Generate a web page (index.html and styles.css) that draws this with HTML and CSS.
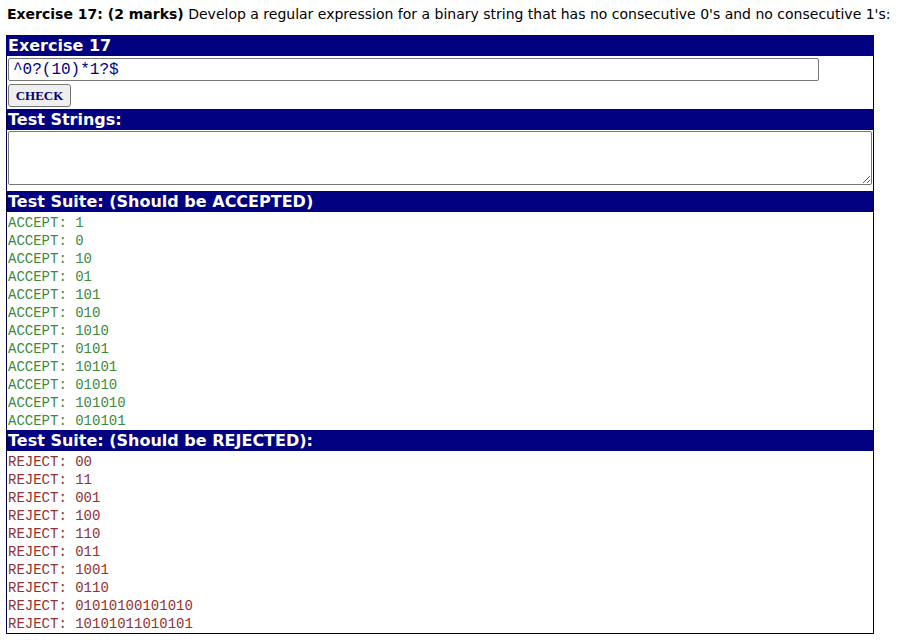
FILE: index.html
```html
<!DOCTYPE html>
<html>
<head>
<meta charset="utf-8">
<link rel="stylesheet" href="styles.css">
</head>
<body>
<p class="intro"><b>Exercise 17: (2 marks)</b> Develop a regular expression for a binary string that has no consecutive 0's and no consecutive 1's:</p>
<div class="box">
  <div class="hdr hdr-first">Exercise 17</div>
  <input class="regex" type="text" value="^0?(10)*1?$">
  <button class="check">CHECK</button>
  <div class="hdr">Test Strings:</div>
  <textarea class="tests"></textarea>
  <div class="hdr hdr-gap">Test Suite: (Should be ACCEPTED)</div>
  <div class="list accept">
    <div>ACCEPT: 1</div>
    <div>ACCEPT: 0</div>
    <div>ACCEPT: 10</div>
    <div>ACCEPT: 01</div>
    <div>ACCEPT: 101</div>
    <div>ACCEPT: 010</div>
    <div>ACCEPT: 1010</div>
    <div>ACCEPT: 0101</div>
    <div>ACCEPT: 10101</div>
    <div>ACCEPT: 01010</div>
    <div>ACCEPT: 101010</div>
    <div>ACCEPT: 010101</div>
  </div>
  <div class="hdr">Test Suite: (Should be REJECTED):</div>
  <div class="list reject">
    <div>REJECT: 00</div>
    <div>REJECT: 11</div>
    <div>REJECT: 001</div>
    <div>REJECT: 100</div>
    <div>REJECT: 110</div>
    <div>REJECT: 011</div>
    <div>REJECT: 1001</div>
    <div>REJECT: 0110</div>
    <div>REJECT: 01010100101010</div>
    <div>REJECT: 10101011010101</div>
  </div>
</div>
</body>
</html>
```
FILE: styles.css
```css
html, body {
  margin: 0;
  padding: 0;
  background: #fff;
}
body {
  font-family: "DejaVu Sans", Verdana, sans-serif;
  color: #000;
}
.intro {
  margin: 0;
  padding: 5px 0 0 7px;
  height: 30px;
  box-sizing: border-box;
  font-size: 14px;
  line-height: 18px;
  white-space: nowrap;
}
.box {
  margin: 5px 0 0 6px;
  width: 868px;
  box-sizing: border-box;
  border: 1px solid #000040;
  border-top: none;
}
.hdr {
  background: #000080;
  color: #fff;
  font-family: "DejaVu Sans", Verdana, sans-serif;
  font-weight: bold;
  font-size: 16px;
  height: 21px;
  line-height: 21px;
  padding-left: 1px;
  white-space: nowrap;
}
.hdr-first {
  margin-left: -1px;
  margin-right: -1px;
  padding-left: 2px;
}
.regex {
  display: block;
  margin: 2px 0 0 1px;
  width: 811px;
  height: 23px;
  box-sizing: border-box;
  border: 1px solid #767676;
  border-radius: 2px;
  padding: 0 4px;
  font-family: "Liberation Mono", "Courier New", monospace;
  font-size: 16px;
  color: #000080;
  outline: none;
}
.check {
  display: block;
  margin: 3px 0 2px 1px;
  width: 63px;
  height: 23px;
  box-sizing: border-box;
  border: 1px solid #767676;
  border-radius: 3px;
  background: #efefef;
  font-family: "Liberation Serif", "Times New Roman", serif;
  font-weight: bold;
  font-size: 13px;
  color: #000080;
  padding: 0;
}
.tests {
  display: block;
  margin: 1px 0 0 1px;
  width: 864px;
  height: 54px;
  box-sizing: border-box;
  border: 1px solid #767676;
  border-radius: 2px;
  resize: both;
}
.hdr-gap {
  margin-top: 6px;
}
.list {
  font-family: "Liberation Mono", "Courier New", monospace;
  font-size: 14px;
  line-height: 18px;
  padding: 2px 0 0 1px;
}
.accept {
  color: #3c8a3c;
}
.reject {
  color: #943030;
}
```
